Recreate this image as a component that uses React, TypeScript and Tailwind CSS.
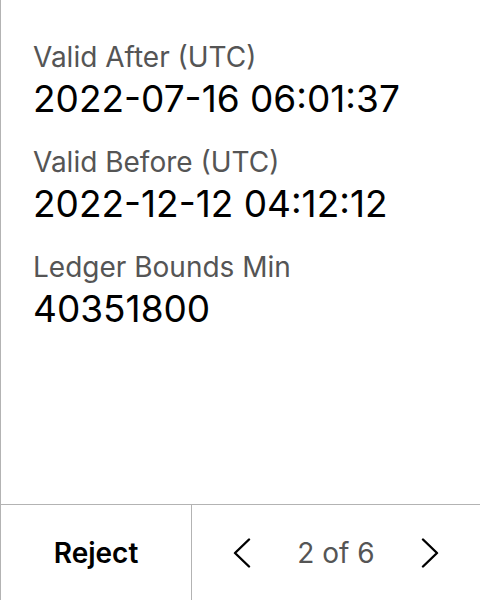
import React from "react";

function Field({ label, value }: { label: string; value: string }) {
  return (
    <div className="flex flex-col">
      <div className="text-[28px] leading-[34px] text-[#555555]">{label}</div>
      <div className="mt-[3px] text-[37px] leading-[44px] text-black">{value}</div>
    </div>
  );
}

function Chevron({ dir }: { dir: "left" | "right" }) {
  return (
    <svg width="18" height="30" viewBox="0 0 18 30" fill="none" stroke="black" strokeWidth="2.4" strokeLinecap="round" strokeLinejoin="round">
      {dir === "left" ? <path d="M16 1.5 L2 15 L16 28.5" /> : <path d="M2 1.5 L16 15 L2 28.5" />}
    </svg>
  );
}

export default function App() {
  return (
    <div
      className="w-[480px] h-[600px] flex flex-col bg-white border-l border-[#b3b3b3]"
      style={{ fontFamily: "Inter, 'Noto Sans', sans-serif" }}
    >
      <div className="flex-1 flex flex-col gap-[24px] pl-[32px] pt-[40px]">
        <Field label="Valid After (UTC)" value="2022-07-16 06:01:37" />
        <Field label="Valid Before (UTC)" value="2022-12-12 04:12:12" />
        <Field label="Ledger Bounds Min" value="40351800" />
      </div>
      <div className="h-[96px] flex border-t border-[#b3b3b3]">
        <div className="w-[191px] flex items-center justify-center text-[28px] font-semibold text-black border-r border-[#b3b3b3]">
          Reject
        </div>
        <div className="flex-1 flex items-center justify-center gap-[46px]">
          <Chevron dir="left" />
          <span className="text-[28px] text-[#555555]">2 of 6</span>
          <Chevron dir="right" />
        </div>
      </div>
    </div>
  );
}
